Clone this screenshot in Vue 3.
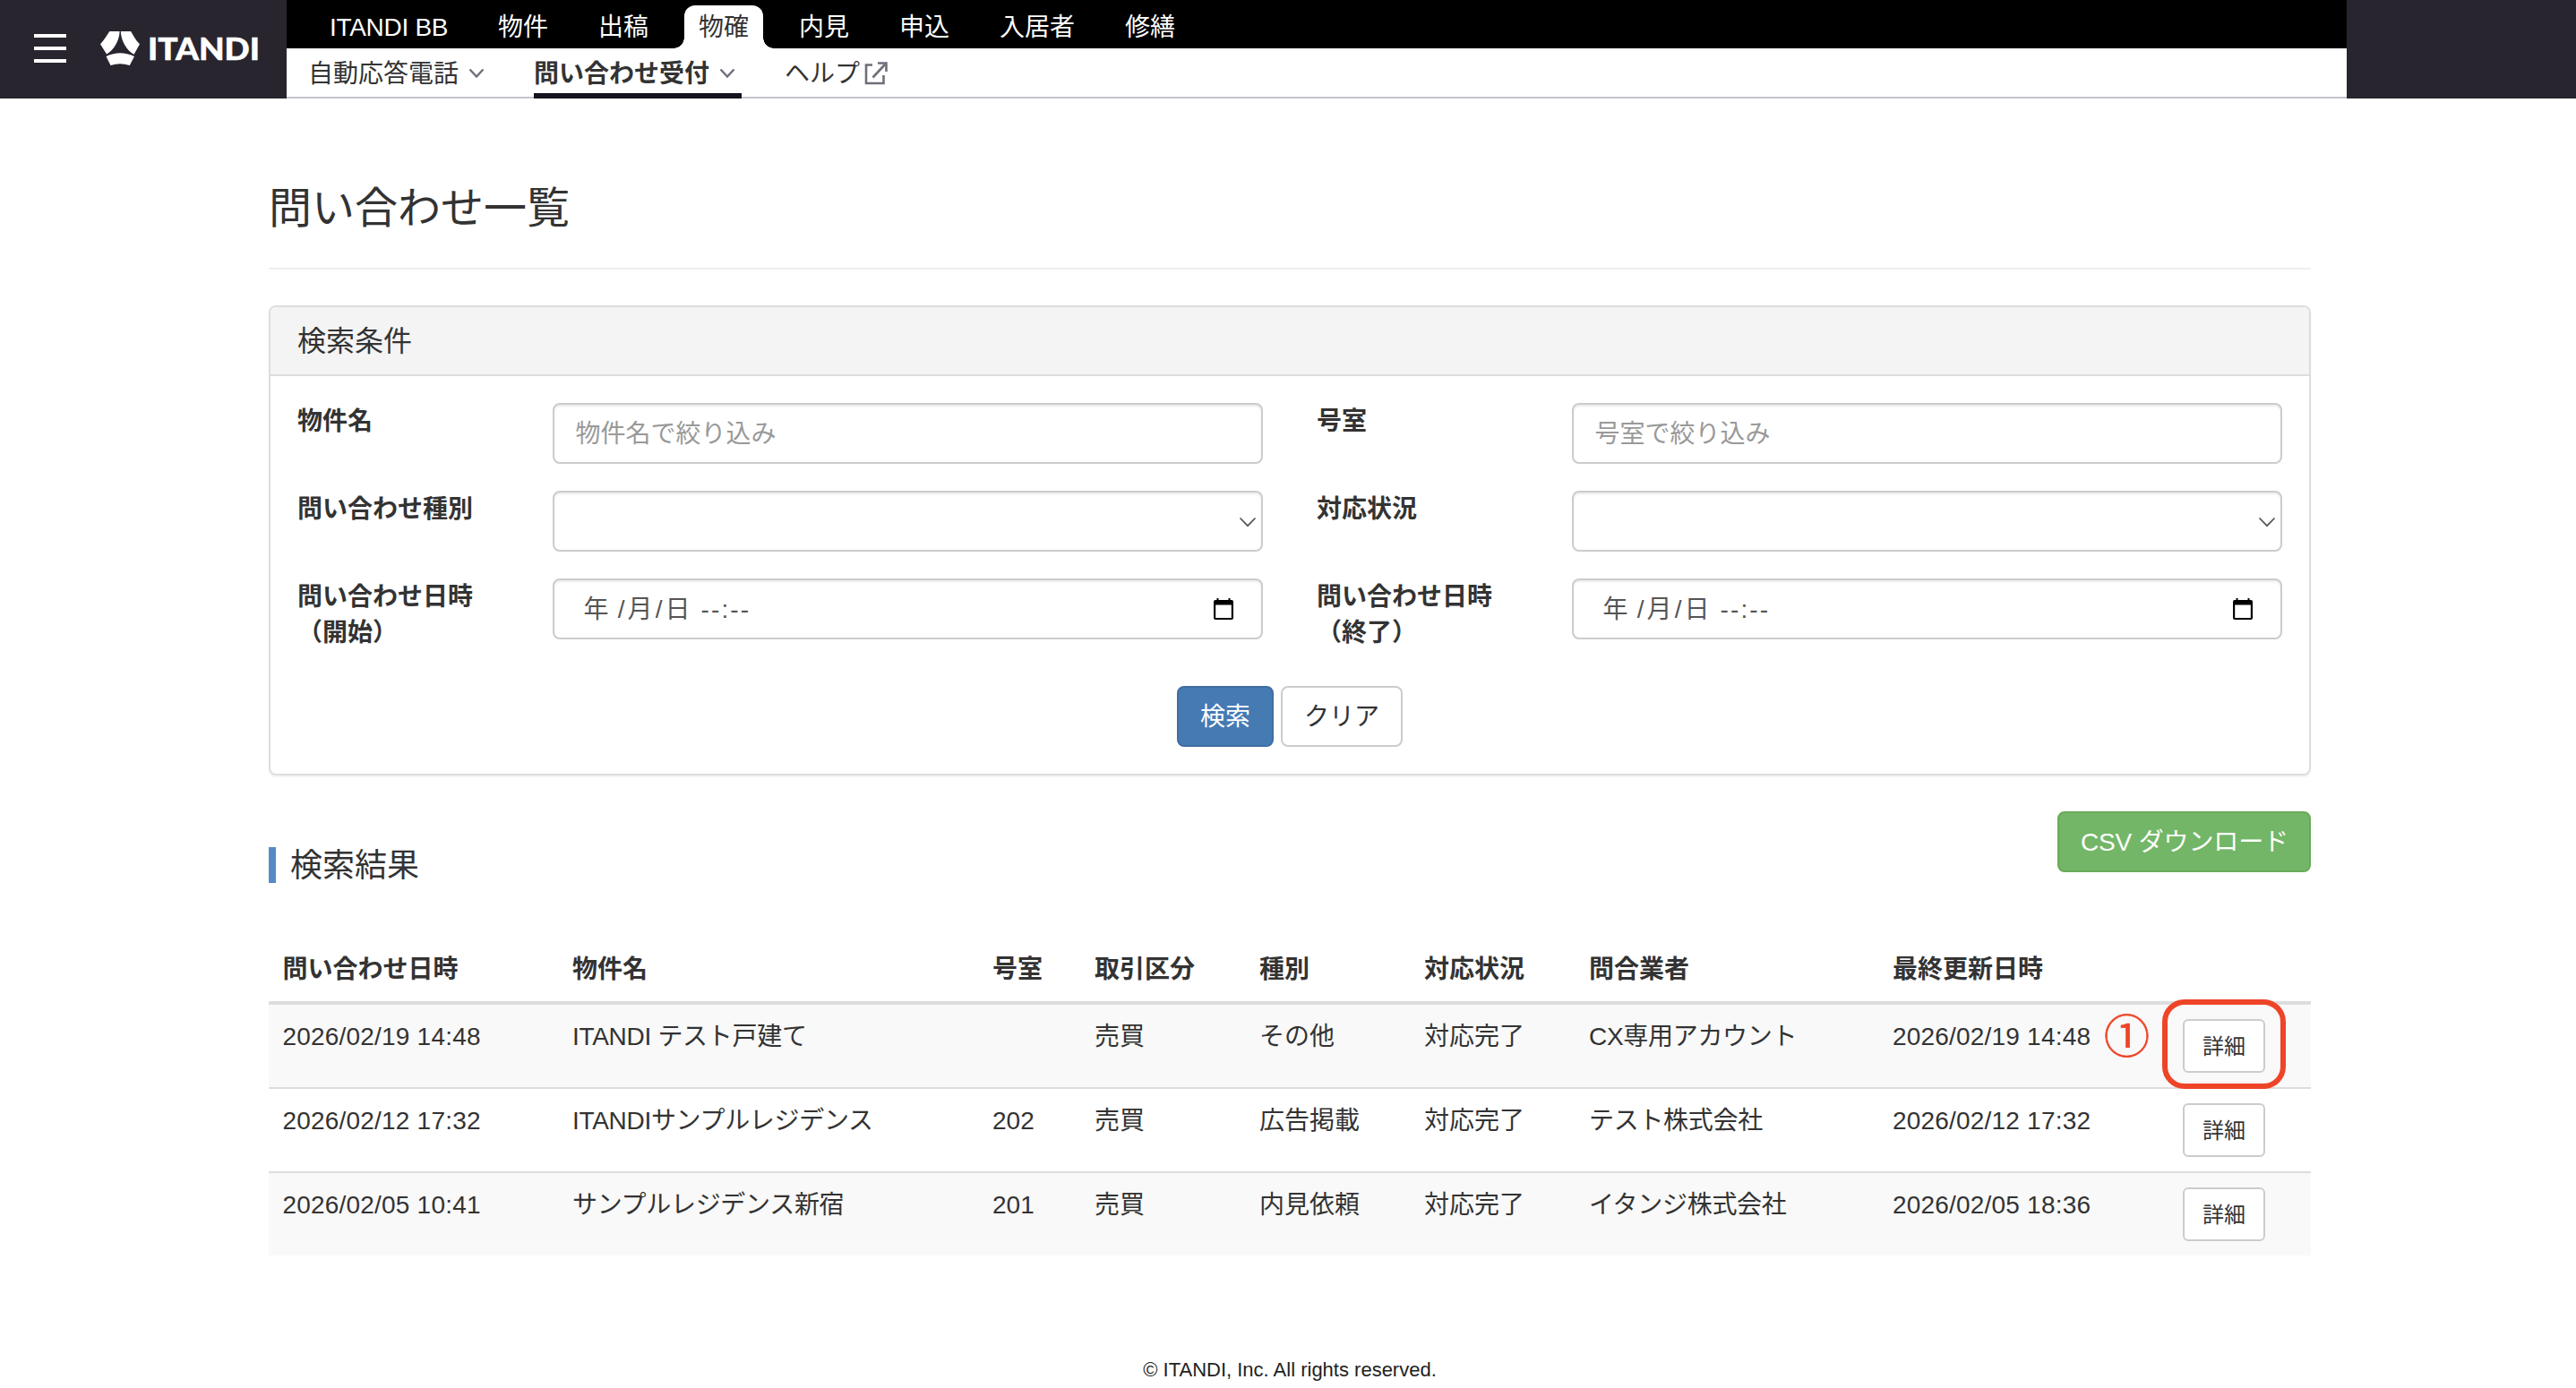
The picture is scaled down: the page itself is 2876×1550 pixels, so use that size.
<template>
  <div class="page">
    <header class="header">
      <div class="brand">
        <button class="menu-button" aria-label="menu">
          <span></span>
          <span></span>
          <span></span>
        </button>
        <svg class="logo" width="180" height="44" viewBox="0 0 180 44">
          <path d="M10.3 3H21.6C21.2 13.5 15.5 23.5 7 28.6L0 17.2Q3.500 13.600 6.200 9.300Z" fill="#fff" />
          <path d="M22.8 3H34.1L38.2 10Q40.800 14.400 44 17.200L37.600 28.800C29 24 23.200 13.600 22.800 3Z" fill="#fff" />
          <path d="M6.5 31Q22 23.5 38 31L32.8 41Q22 37.5 11.5 41Z" fill="#fff" />
          <text x="53" y="35.4" textLength="125" lengthAdjust="spacingAndGlyphs">ITANDI</text>
        </svg>
      </div>

      <div class="navs">
        <nav class="service-nav">
          <a
            v-for="item in services"
            :key="item"
            class="service"
            :class="{ active: item === '物確' }"
          >{{ item }}</a>
        </nav>
        <nav class="sub-nav">
          <a v-for="item in subMenus" :key="item.label" class="sub" :class="{ current: item.current }">
            <span>{{ item.label }}</span>
            <svg v-if="item.external" class="external" width="26" height="26" viewBox="0 0 26 26">
              <path d="M9 3.5H2V24H21.5V15" />
              <path d="M9.5 17.5L23 3" />
              <path d="M15 1.5H24.5V11" />
            </svg>
            <svg v-else class="chevron" width="18" height="12" viewBox="0 0 18 12">
              <path d="M1.5 1.5L9 9.5L16.5 1.5" />
            </svg>
          </a>
        </nav>
      </div>
    </header>

    <main class="container">
      <h1>問い合わせ一覧</h1>

      <section class="panel">
        <div class="panel-heading">検索条件</div>
        <div class="panel-body">
          <div class="fields">
            <div v-for="field in fields" :key="field.id" class="field">
              <label :for="field.id">{{ field.label }}<template v-if="field.sub"><br />{{ field.sub }}</template></label>
              <input v-if="field.type === 'text'" :id="field.id" class="control" type="text" :placeholder="field.placeholder" />
              <div v-else-if="field.type === 'select'" :id="field.id" class="control select">
                <svg width="20" height="12" viewBox="0 0 20 12">
                  <path d="M1.500 1.500L10 10.200L18.500 1.500" />
                </svg>
              </div>
              <div v-else :id="field.id" class="control datetime">
                <span class="year">年</span>
                <span class="slash">/</span>
                <span>月</span>
                <span class="slash">/</span>
                <span>日</span>
                <span class="time">--:--</span>
                <svg width="22" height="24" viewBox="0 0 22 24">
                  <path d="M3.5 0H5.5V2H16.5V0H18.5V2H20Q22 2 22 4V22Q22 24 20 24H2Q0 24 0 22V4Q0 2 2 2H3.5ZM2.200 7.500V22H19.800V7.500Z" fill-rule="evenodd" />
                </svg>
              </div>
            </div>
          </div>
          <div class="actions">
            <button class="btn primary">検索</button>
            <button class="btn">クリア</button>
          </div>
        </div>
      </section>

      <div class="result-head">
        <h2>検索結果</h2>
        <button class="btn success">CSV ダウンロード</button>
      </div>

      <table>
        <colgroup>
          <col v-for="col in columns" :key="col.key" :style="{ width: col.width + 'px' }" />
        </colgroup>
        <thead>
          <tr>
            <th v-for="col in columns" :key="col.key">{{ col.label }}</th>
          </tr>
        </thead>
        <tbody>
          <tr v-for="(row, r) in rows" :key="r">
            <td v-for="(cell, i) in row" :key="i" :class="columns[i].key">{{ cell }}</td>
            <td>
              <div class="detail">
                <button class="btn small">詳細</button>
                <template v-if="r === 0">
                  <span class="marker-number">①</span>
                  <span class="marker-frame"></span>
                </template>
              </div>
            </td>
          </tr>
        </tbody>
      </table>
    </main>

    <footer>© ITANDI, Inc. All rights reserved.</footer>
  </div>
</template>

<script setup>
const services = ['ITANDI BB', '物件', '出稿', '物確', '内見', '申込', '入居者', '修繕']

const subMenus = [
  { label: '自動応答電話' },
  { label: '問い合わせ受付', current: true },
  { label: 'ヘルプ', external: true },
]

const fields = [
  { id: 'building', label: '物件名', type: 'text', placeholder: '物件名で絞り込み' },
  { id: 'room', label: '号室', type: 'text', placeholder: '号室で絞り込み' },
  { id: 'kind', label: '問い合わせ種別', type: 'select' },
  { id: 'status', label: '対応状況', type: 'select' },
  { id: 'from', label: '問い合わせ日時', sub: '（開始）', type: 'datetime' },
  { id: 'to', label: '問い合わせ日時', sub: '（終了）', type: 'datetime' },
]

const columns = [
  { key: 'date', label: '問い合わせ日時', width: 323.5 },
  { key: 'name', label: '物件名', width: 469 },
  { key: 'number', label: '号室', width: 114 },
  { key: 'deal', label: '取引区分', width: 184 },
  { key: 'type', label: '種別', width: 184 },
  { key: 'state', label: '対応状況', width: 184 },
  { key: 'agency', label: '問合業者', width: 339 },
  { key: 'updated', label: '最終更新日時', width: 323 },
  { key: 'action', label: '', width: 159.5 },
]

const rows = [
  ['2026/02/19 14:48', 'ITANDI テスト戸建て', '', '売買', 'その他', '対応完了', 'CX専用アカウント', '2026/02/19 14:48'],
  ['2026/02/12 17:32', 'ITANDIサンプルレジデンス', '202', '売買', '広告掲載', '対応完了', 'テスト株式会社', '2026/02/12 17:32'],
  ['2026/02/05 10:41', 'サンプルレジデンス新宿', '201', '売買', '内見依頼', '対応完了', 'イタンジ株式会社', '2026/02/05 18:36'],
]
</script>

<style>
body {
  margin: 0;
  background: #fff;
}
</style>

<style scoped>
.page {
  min-height: 1550px;
  font-family: "Liberation Sans", "Noto Sans CJK JP", sans-serif;
  font-size: 28px;
  line-height: 40px;
  color: #333;
}

.page * {
  box-sizing: border-box;
}

button,
input {
  font-family: inherit;
  font-size: inherit;
}

.header {
  display: flex;
  height: 110px;
  background: #28252f;
}

.brand {
  display: flex;
  align-items: flex-start;
  width: 320px;
  padding: 32px 0 0 38px;
}

.menu-button {
  display: flex;
  flex-direction: column;
  gap: 10px;
  width: 36px;
  margin-right: 38px;
  padding: 6px 0 0;
  border: 0;
  background: none;
}

.menu-button span {
  height: 4px;
  background: #fff;
}

.logo text {
  font-family: Lato, sans-serif;
  font-size: 34px;
  font-weight: 900;
  fill: #fff;
  stroke: #fff;
  stroke-width: 0.5;
}

.navs {
  width: 2300px;
  background: #fff;
}

.service-nav {
  display: flex;
  align-items: flex-end;
  gap: 24px;
  height: 54px;
  padding-left: 32px;
  background: #000;
}

.service {
  position: relative;
  height: 48px;
  padding: 0 16px;
  line-height: 50px;
  color: #fff;
  white-space: nowrap;
}

.service:first-child {
  width: 164px;
  letter-spacing: -0.3px;
}

.service.active {
  border-radius: 12px 12px 0 0;
  background: #fff;
  color: #333;
}

.service.active::before,
.service.active::after {
  content: '';
  position: absolute;
  bottom: 0;
  width: 12px;
  height: 12px;
}

.service.active::before {
  left: -12px;
  background: radial-gradient(circle at 0 0, transparent 11.5px, #fff 12px);
}

.service.active::after {
  right: -12px;
  background: radial-gradient(circle at 100% 0, transparent 11.5px, #fff 12px);
}

.sub-nav {
  display: flex;
  gap: 48px;
  height: 56px;
  padding-left: 24px;
  border-bottom: 2px solid #c6c5cd;
}

.sub {
  display: flex;
  align-items: center;
  height: 56px;
  white-space: nowrap;
}

.sub span {
  padding-top: 2px;
}

.sub.current {
  font-weight: bold;
  box-shadow: inset 0 -6px #14141f;
}

.chevron {
  margin: 0 7px 0 11px;
  fill: none;
  stroke: #6f6e79;
  stroke-width: 2.4;
}

.external {
  margin-left: 5px;
  fill: none;
  stroke: #6f6e79;
  stroke-width: 2.6;
}

.container {
  width: 2280px;
  margin: 0 0 0 300px;
}

h1 {
  margin: 0 0 40px;
  padding: 95px 0 38px;
  border-bottom: 2px solid #eee;
  font-size: 48px;
  font-weight: normal;
  line-height: 56px;
}

.panel {
  border: 2px solid #ddd;
  border-radius: 8px;
  box-shadow: 0 2px 2px rgba(0, 0, 0, 0.05);
}

.panel-heading {
  height: 77px;
  padding: 0 30px;
  border-bottom: 2px solid #ddd;
  border-radius: 6px 6px 0 0;
  background: #f4f4f4;
  font-size: 32px;
  line-height: 76px;
}

.panel-body {
  padding: 30px;
}

.fields {
  display: grid;
  grid-template-columns: 1fr 1fr;
  gap: 30px 60px;
}

.field {
  display: grid;
  grid-template-columns: 254.5px 1fr;
  align-items: start;
  column-gap: 30px;
  height: 68px;
}

.field label {
  padding-top: 1px;
  font-weight: bold;
}

.control {
  display: flex;
  align-items: center;
  width: 100%;
  height: 68px;
  padding: 1px 24px 0;
  border: 2px solid #ccc;
  border-radius: 8px;
  background: #fff;
  box-shadow: inset 0 2px 2px rgba(0, 0, 0, 0.075);
  color: #555;
}

.control::placeholder {
  color: #999;
  opacity: 1;
}

.select {
  justify-content: flex-end;
  padding-right: 5px;
}

.select svg {
  fill: none;
  stroke: #555;
  stroke-width: 1.7;
}

.datetime {
  padding: 0 31px 0 33px;
}

.datetime span {
  padding-top: 1px;
}

.year {
  margin-right: 7px;
}

.slash {
  width: 14px;
  text-align: center;
}

.time {
  margin-left: 12px;
  letter-spacing: 2.1px;
}

.datetime svg {
  margin-left: auto;
}

.actions {
  display: flex;
  justify-content: center;
  gap: 8px;
  /* the second label line hangs below the last row of controls */
  margin-top: 52px;
}

.btn {
  height: 68px;
  padding: 1px 24px 0;
  border: 2px solid #ccc;
  border-radius: 8px;
  background: #fff;
  color: #333;
  line-height: 40px;
  white-space: nowrap;
}

.btn.primary {
  border-color: #3f6da3;
  background: #467ab3;
  color: #fff;
}

.btn.success {
  width: 283px;
  border-color: #68ab58;
  background: #73b667;
  color: #fff;
  letter-spacing: -0.15px;
}

.btn.small {
  height: 60px;
  padding: 1px 20px 0;
  border-radius: 6px;
  font-size: 24px;
}

.result-head {
  display: flex;
  justify-content: space-between;
  height: 80px;
  margin: 40px 0 60px;
}

h2 {
  align-self: flex-end;
  height: 40px;
  margin: 0;
  padding-left: 16px;
  border-left: 8px solid #5789c7;
  font-size: 36px;
  font-weight: normal;
  line-height: 42px;
}

table {
  width: 2280px;
  border-spacing: 0;
  table-layout: fixed;
}

th,
td {
  padding: 16px 15.5px;
  text-align: left;
  vertical-align: top;
  white-space: nowrap;
}

th {
  padding: 17px 15.5px 15px;
  border-bottom: 4px solid #ddd;
}

tbody tr:nth-child(odd) {
  background: #f9f9f9;
}

tbody tr + tr td {
  border-top: 2px solid #ddd;
}

.date,
.updated {
  letter-spacing: 0.2px;
}

.name,
.agency {
  letter-spacing: -0.3px;
}

.detail {
  position: relative;
  display: flex;
  padding-left: 1px;
}

.marker-number {
  position: absolute;
  top: -9px;
  left: -87px;
  color: #ee4427;
  font-family: "Noto Sans CJK JP", sans-serif;
  font-size: 51px;
  line-height: 51px;
  -webkit-text-stroke: 0.6px #ee4427;
}

.marker-frame {
  position: absolute;
  top: -22px;
  left: -22px;
  width: 138px;
  height: 100px;
  border: 6px solid #ee4427;
  border-radius: 25px;
}

footer {
  margin-top: 108px;
  padding-left: 4px;
  font-size: 22px;
  color: #222;
  text-align: center;
}
</style>
